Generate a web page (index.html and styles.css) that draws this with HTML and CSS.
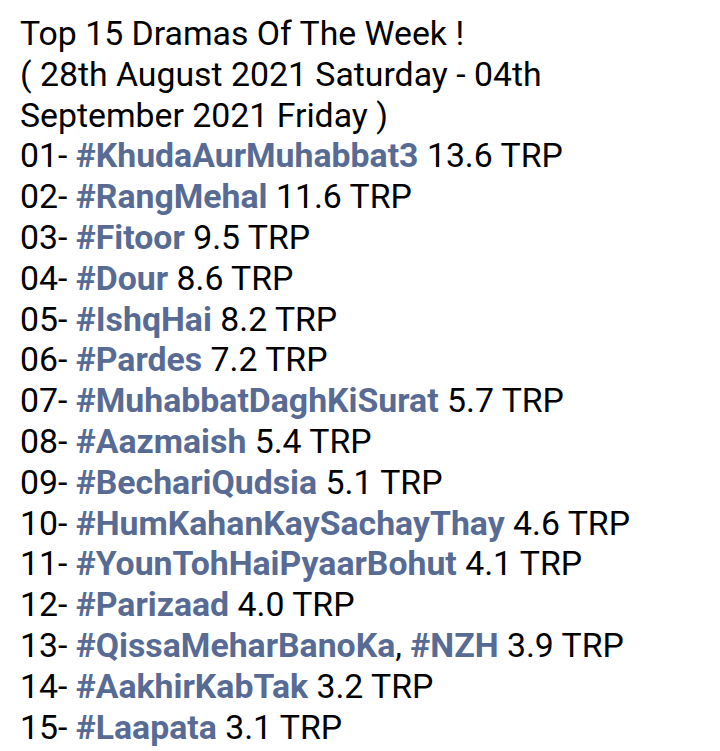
FILE: index.html
```html
<!DOCTYPE html>
<html>
<head>
<meta charset="utf-8">
<link rel="stylesheet" href="styles.css">
</head>
<body>
<div class="post">
<div class="line">Top 15 Dramas Of The Week !</div>
<div class="line">( 28th August 2021 Saturday - 04th</div>
<div class="line">September 2021 Friday )</div>
<div class="line">01- <span class="tag">#KhudaAurMuhabbat3</span> 13.6 TRP</div>
<div class="line">02- <span class="tag">#RangMehal</span> 11.6 TRP</div>
<div class="line">03- <span class="tag">#Fitoor</span> 9.5 TRP</div>
<div class="line">04- <span class="tag">#Dour</span> 8.6 TRP</div>
<div class="line">05- <span class="tag">#IshqHai</span> 8.2 TRP</div>
<div class="line">06- <span class="tag">#Pardes</span> 7.2 TRP</div>
<div class="line">07- <span class="tag">#MuhabbatDaghKiSurat</span> 5.7 TRP</div>
<div class="line">08- <span class="tag">#Aazmaish</span> 5.4 TRP</div>
<div class="line">09- <span class="tag">#BechariQudsia</span> 5.1 TRP</div>
<div class="line">10- <span class="tag">#HumKahanKaySachayThay</span> 4.6 TRP</div>
<div class="line">11- <span class="tag">#YounTohHaiPyaarBohut</span> 4.1 TRP</div>
<div class="line">12- <span class="tag">#Parizaad</span> 4.0 TRP</div>
<div class="line">13- <span class="tag">#QissaMeharBanoKa</span>, <span class="tag">#NZH</span> 3.9 TRP</div>
<div class="line">14- <span class="tag">#AakhirKabTak</span> 3.2 TRP</div>
<div class="line">15- <span class="tag">#Laapata</span> 3.1 TRP</div>
</div>
</body>
</html>
```
FILE: styles.css
```css
html, body {
  margin: 0;
  padding: 0;
  background: #ffffff;
}
.post {
  padding: 14px 20px 0 20px;
  font-family: Roboto, "Noto Sans", sans-serif;
  font-size: 33.8px;
  line-height: 40.8px;
  color: #000000;
}
.line {
  white-space: nowrap;
}
.tag {
  color: #576b95;
  font-weight: bold;
}
```
